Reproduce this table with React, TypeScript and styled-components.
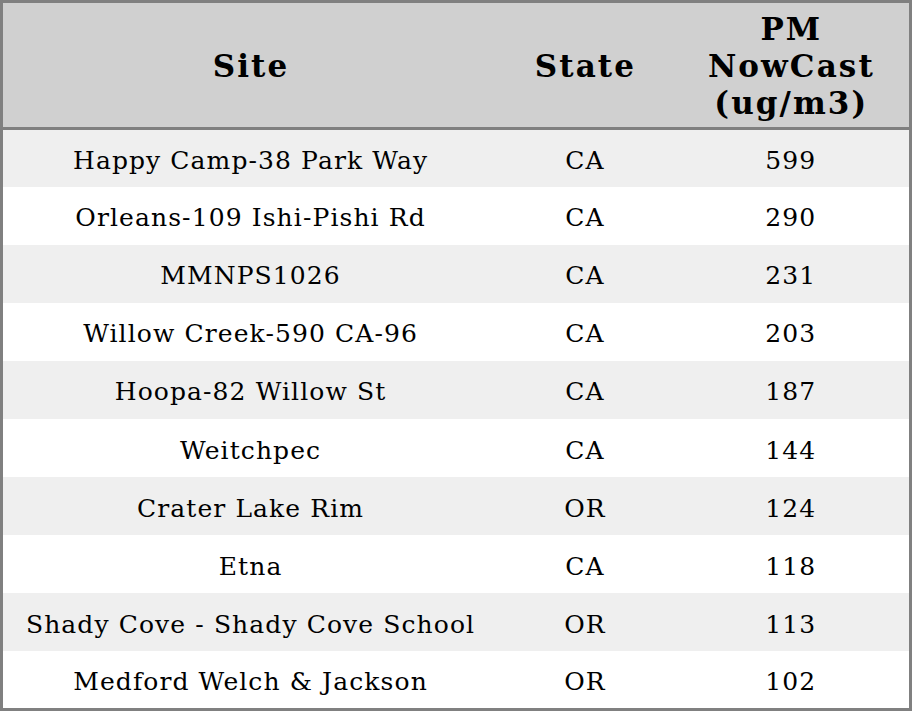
import React from "react";
import styled, { createGlobalStyle } from "styled-components";

const Global = createGlobalStyle`
  html, body { margin: 0; padding: 0; background: #fff; }
  body { font-family: "DejaVu Serif", serif; }
`;

const Table = styled.table`
  width: 912px;
  height: 711px;
  border-collapse: collapse;
  border: 3px solid #808080;
  box-sizing: border-box;
  table-layout: fixed;
  font-family: "DejaVu Serif", serif;
  color: #000;
`;

const HeadRow = styled.tr`
  background: #d0d0d0;
  height: 127px;
  border-bottom: 3px solid #808080;
`;

const Th = styled.th<{ $w: number }>`
  box-sizing: border-box;
  width: ${(p) => p.$w}px;
  font-size: 31px;
  letter-spacing: 2.1px;
  line-height: 37px;
  font-weight: bold;
  text-align: center;
  vertical-align: middle;
  padding: 2px 0 0 2px;
`;

const Row = styled.tr<{ $odd: boolean }>`
  background: ${(p) => (p.$odd ? "#efefef" : "#ffffff")};
  height: 57.7px;
`;

const Td = styled.td`
  box-sizing: border-box;
  font-size: 25px;
  letter-spacing: 1.1px;
  text-align: center;
  vertical-align: middle;
  padding: 4px 0 0 1px;
`;

const data: [string, string, string][] = [
  ["Happy Camp-38 Park Way", "CA", "599"],
  ["Orleans-109 Ishi-Pishi Rd", "CA", "290"],
  ["MMNPS1026", "CA", "231"],
  ["Willow Creek-590 CA-96", "CA", "203"],
  ["Hoopa-82 Willow St", "CA", "187"],
  ["Weitchpec", "CA", "144"],
  ["Crater Lake Rim", "OR", "124"],
  ["Etna", "CA", "118"],
  ["Shady Cove - Shady Cove School", "OR", "113"],
  ["Medford Welch & Jackson", "OR", "102"],
];

export default function App() {
  return (
    <>
      <Global />
      <Table>
        <thead>
          <HeadRow>
            <Th $w={494}>Site</Th>
            <Th $w={174}>State</Th>
            <Th $w={238}>
              PM
              <br />
              NowCast
              <br />
              (ug/m3)
            </Th>
          </HeadRow>
        </thead>
        <tbody>
          {data.map((r, i) => (
            <Row key={i} $odd={i % 2 === 0}>
              <Td>{r[0]}</Td>
              <Td>{r[1]}</Td>
              <Td>{r[2]}</Td>
            </Row>
          ))}
        </tbody>
      </Table>
    </>
  );
}
